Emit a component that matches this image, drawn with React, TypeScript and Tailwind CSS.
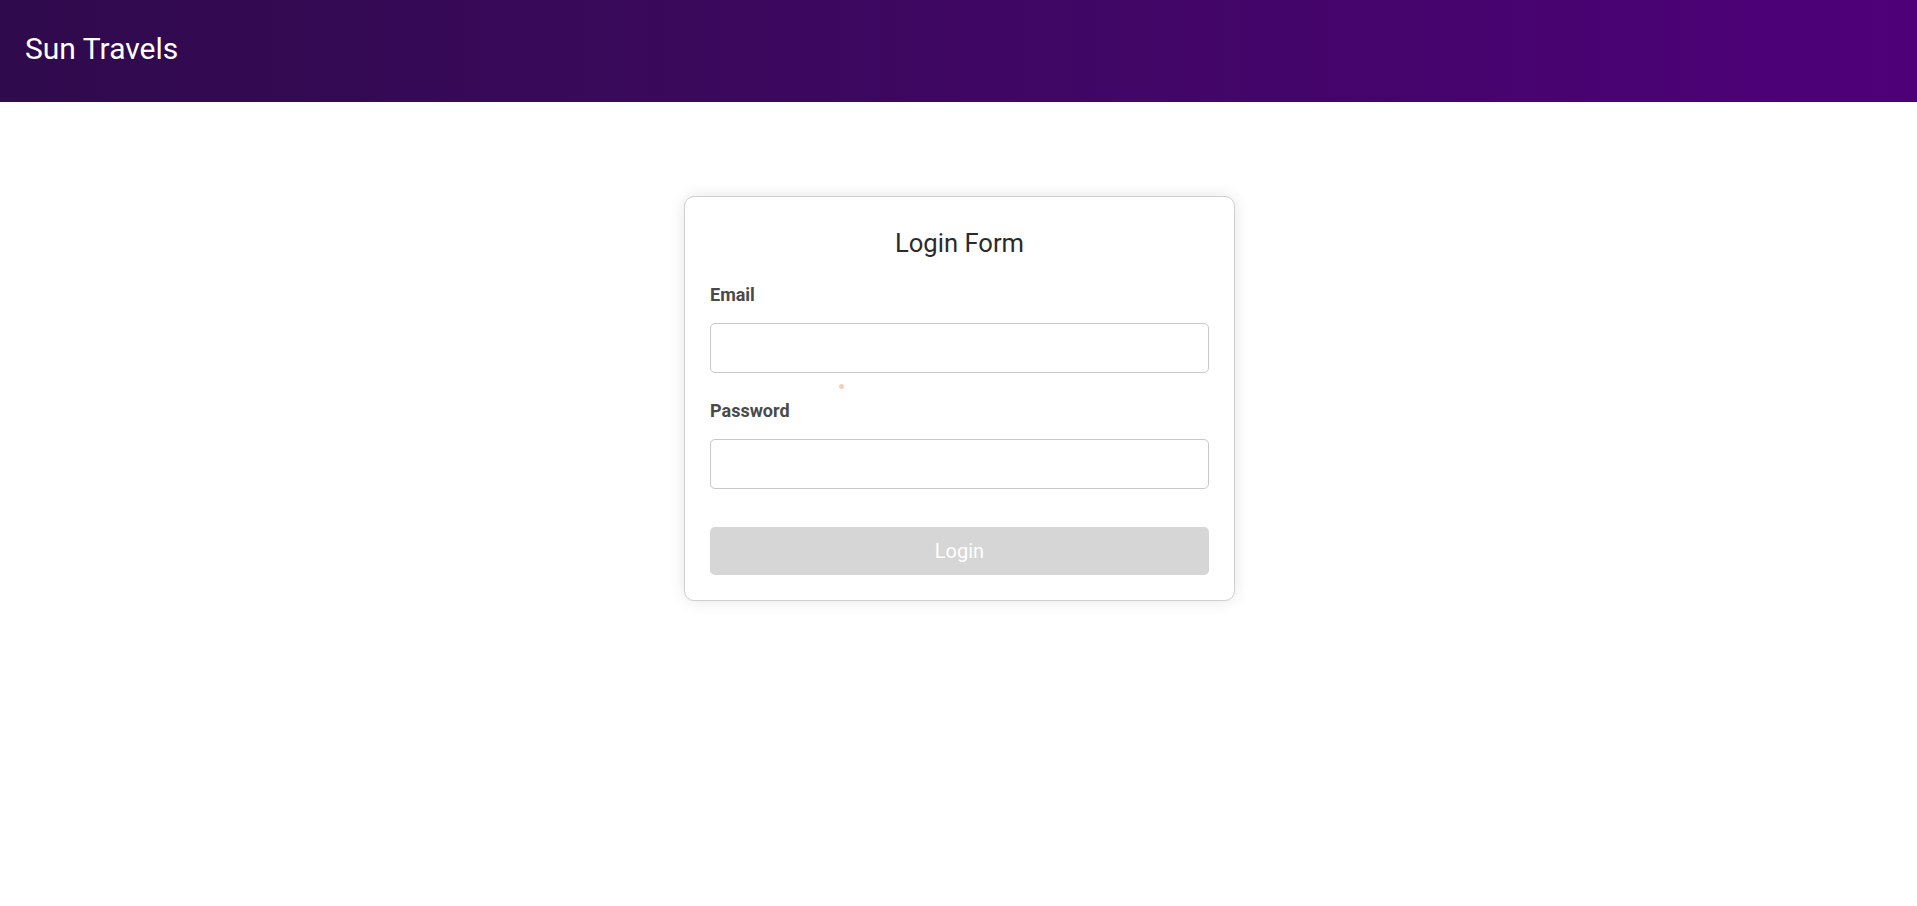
import React from "react";

export default function App() {
  return (
    <div className="min-h-screen bg-white" style={{ fontFamily: "Roboto, 'Liberation Sans', sans-serif" }}>
      <header className="h-[102px] flex items-center px-[25px] pb-[5px] bg-gradient-to-r from-[#2f0a4c] to-[#4e0079]">
        <h1 className="text-[30px] text-white font-normal">Sun Travels</h1>
      </header>

      <main className="flex justify-center pt-[94px] pl-[2px]">
        <form
          onSubmit={(e) => e.preventDefault()}
          className="relative w-[551px] bg-white border border-[#cfcfcf] rounded-[10px] shadow-[0_0_16px_rgba(0,0,0,0.1)] px-[25px] pt-[27px] pb-[25px] flex flex-col"
        >
          <h2 className="text-[25.6px] leading-[38px] text-center text-[#2b2b2b] font-normal">Login Form</h2>

          <label htmlFor="email" className="mt-[20px] text-[18px] leading-[26px] font-bold text-[#4a4a4a]">
            Email
          </label>
          <input
            id="email"
            type="email"
            className="mt-[15px] h-[50px] w-full rounded-[5px] border border-[#c9c9c9] px-3 text-lg outline-none"
          />

          <span className="absolute left-[154px] top-[187px] w-[5px] h-[5px] rounded-full bg-[#f7cdb6]" />

          <label htmlFor="password" className="mt-[25px] text-[18px] leading-[26px] font-bold text-[#4a4a4a]">
            Password
          </label>
          <input
            id="password"
            type="password"
            className="mt-[15px] h-[50px] w-full rounded-[5px] border border-[#c9c9c9] px-3 text-lg outline-none"
          />

          <button
            type="submit"
            disabled
            className="mt-[38px] h-[48px] w-full rounded-[5px] bg-[#d6d6d6] text-white text-[20px]"
          >
            Login
          </button>
        </form>
      </main>
    </div>
  );
}
